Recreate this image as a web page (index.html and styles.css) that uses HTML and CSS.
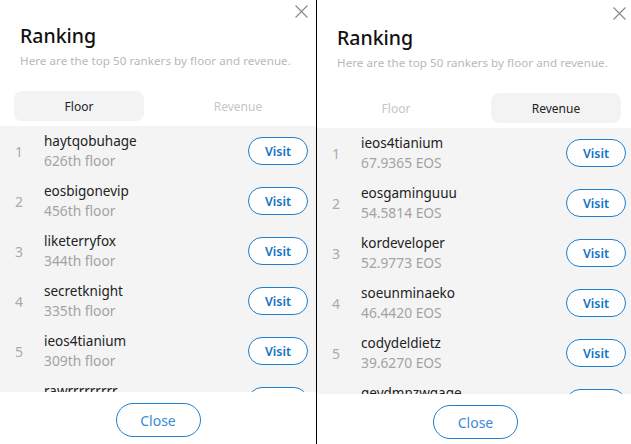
FILE: index.html
```html
<!DOCTYPE html>
<html lang="en">
<head>
<meta charset="utf-8">
<title>Ranking</title>
<link rel="stylesheet" href="styles.css">
</head>
<body>
<div class="screens">
  <section class="modal modal--floor">
    <button class="close-x" aria-label="Close">
      <svg viewBox="0 0 12 12" width="12" height="12"><path d="M0.5 0.5 L11.5 11.5 M11.5 0.5 L0.5 11.5" /></svg>
    </button>
    <header class="head">
      <h1 class="title">Ranking</h1>
      <p class="subtitle">Here are the top 50 rankers by floor and revenue.</p>
    </header>
    <nav class="tabs">
      <span class="tab tab--active">Floor</span>
      <span class="tab">Revenue</span>
    </nav>
    <ul class="list">
      <li class="row"><span class="rank">1</span><div class="info"><span class="name">haytqobuhage</span><span class="value">626th floor</span></div><button class="visit">Visit</button></li>
      <li class="row"><span class="rank">2</span><div class="info"><span class="name">eosbigonevip</span><span class="value">456th floor</span></div><button class="visit">Visit</button></li>
      <li class="row"><span class="rank">3</span><div class="info"><span class="name">liketerryfox</span><span class="value">344th floor</span></div><button class="visit">Visit</button></li>
      <li class="row"><span class="rank">4</span><div class="info"><span class="name">secretknight</span><span class="value">335th floor</span></div><button class="visit">Visit</button></li>
      <li class="row"><span class="rank">5</span><div class="info"><span class="name">ieos4tianium</span><span class="value">309th floor</span></div><button class="visit">Visit</button></li>
      <li class="row"><span class="rank">6</span><div class="info"><span class="name">rawrrrrrrrrr</span><span class="value">301th floor</span></div><button class="visit">Visit</button></li>
    </ul>
    <footer class="foot"><button class="close-btn">Close</button></footer>
  </section>

  <section class="modal modal--revenue">
    <button class="close-x" aria-label="Close">
      <svg viewBox="0 0 12 12" width="12" height="12"><path d="M0.5 0.5 L11.5 11.5 M11.5 0.5 L0.5 11.5" /></svg>
    </button>
    <header class="head">
      <h1 class="title">Ranking</h1>
      <p class="subtitle">Here are the top 50 rankers by floor and revenue.</p>
    </header>
    <nav class="tabs">
      <span class="tab">Floor</span>
      <span class="tab tab--active">Revenue</span>
    </nav>
    <ul class="list">
      <li class="row"><span class="rank">1</span><div class="info"><span class="name">ieos4tianium</span><span class="value">67.9365 EOS</span></div><button class="visit">Visit</button></li>
      <li class="row"><span class="rank">2</span><div class="info"><span class="name">eosgaminguuu</span><span class="value">54.5814 EOS</span></div><button class="visit">Visit</button></li>
      <li class="row"><span class="rank">3</span><div class="info"><span class="name">kordeveloper</span><span class="value">52.9773 EOS</span></div><button class="visit">Visit</button></li>
      <li class="row"><span class="rank">4</span><div class="info"><span class="name">soeunminaeko</span><span class="value">46.4420 EOS</span></div><button class="visit">Visit</button></li>
      <li class="row"><span class="rank">5</span><div class="info"><span class="name">codydeldietz</span><span class="value">39.6270 EOS</span></div><button class="visit">Visit</button></li>
      <li class="row"><span class="rank">6</span><div class="info"><span class="name">geydmnzwgage</span><span class="value">38.1020 EOS</span></div><button class="visit">Visit</button></li>
    </ul>
    <footer class="foot"><button class="close-btn">Close</button></footer>
  </section>
</div>
</body>
</html>
```
FILE: styles.css
```css
* { box-sizing: border-box; }

html, body {
  margin: 0;
  padding: 0;
  width: 631px;
  height: 444px;
  overflow: hidden;
  background: #fff;
  font-family: "Noto Sans", "Open Sans", sans-serif;
}

.screens {
  display: flex;
  align-items: flex-start;
  height: 444px;
}

.modal {
  position: relative;
  flex: none;
  width: 317px;
  height: 444px;
  display: flex;
  flex-direction: column;
  background: #fff;
  overflow: hidden;
}

.modal--floor {
  border-right: 1px solid #000;
}

.modal--revenue {
  margin-top: 2px;
}

.close-x {
  position: absolute;
  top: 5px;
  right: 8px;
  width: 13px;
  height: 13px;
  padding: 0;
  border: 0;
  background: none;
  display: block;
}

.close-x svg {
  display: block;
  width: 13px;
  height: 13px;
}

.close-x path {
  stroke: #8a8a8a;
  stroke-width: 1.1;
  fill: none;
}

.head {
  padding: 24px 0 0 20px;
}

.title {
  margin: 0;
  font-size: 19.5px;
  line-height: 24px;
  font-weight: 500;
  color: #111;
}

.subtitle {
  margin: 5px 0 0;
  font-size: 11.6px;
  line-height: 16px;
  letter-spacing: 0.05px;
  color: #b8b8b8;
}

.tabs {
  display: flex;
  justify-content: space-between;
  margin: 22px 13px 0 14px;
}

.tab {
  width: 130px;
  height: 30px;
  border-radius: 8px;
  display: flex;
  align-items: center;
  justify-content: center;
  font-size: 12px;
  color: #c6c6c6;
}

.tab--active {
  background: #f3f3f3;
  color: #222;
}

.list {
  list-style: none;
  margin: 5px 0 0;
  padding: 0;
  height: 266px;
  flex: none;
  overflow: hidden;
  background: #f4f4f4;
}

.row {
  display: flex;
  align-items: center;
  height: 50px;
  padding: 0 8px 0 15px;
}

.rank {
  width: 29px;
  flex: none;
  font-size: 14px;
  color: #ababab;
}

.info {
  flex: 1;
  display: flex;
  flex-direction: column;
}

.name {
  font-size: 13.5px;
  line-height: 19px;
  color: #222;
}

.value {
  font-size: 13.8px;
  line-height: 19px;
  color: #a3a3a3;
}

.visit {
  flex: none;
  width: 60px;
  height: 28px;
  border: 1px solid #1b7fd2;
  border-radius: 14px;
  background: #fff;
  color: #1573c6;
  font-family: inherit;
  font-size: 12.5px;
  font-weight: 600;
  padding: 0;
}

.foot {
  flex: 1;
  display: flex;
  justify-content: center;
  padding-top: 11px;
  background: #fff;
}

.close-btn {
  width: 85px;
  height: 34px;
  border: 1px solid #1b7fd2;
  border-radius: 17px;
  background: #fff;
  color: #3a8ad6;
  font-family: inherit;
  font-size: 14px;
  padding: 0;
}
```
